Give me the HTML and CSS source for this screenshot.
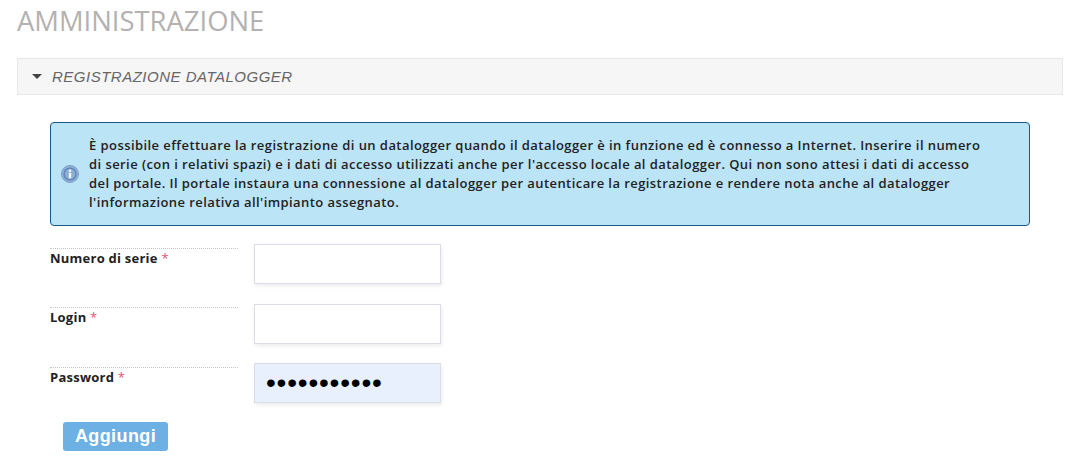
FILE: index.html
```html
<!DOCTYPE html>
<html lang="it">
<head>
<meta charset="utf-8">
<title>Amministrazione</title>
<link rel="stylesheet" href="styles.css">
</head>
<body>
<h1 class="page-title">AMMINISTRAZIONE</h1>
<div class="panel-head"><span class="caret"></span><span class="panel-title">REGISTRAZIONE DATALOGGER</span></div>
<main class="content">
  <div class="alert">
    <svg class="alert-icon" width="18" height="18" viewBox="0 0 18 18" aria-hidden="true">
      <circle cx="9" cy="9" r="8.5" fill="#8fb0d6" stroke="#7d9fca" stroke-width="1"/>
      <circle cx="9" cy="9" r="6.6" fill="#5f86b8"/>
      <circle cx="9" cy="9" r="5.2" fill="#8eaed4"/>
      <circle cx="9" cy="5.8" r="1.3" fill="#f4f7fb"/>
      <rect x="7.8" y="7.8" width="2.4" height="5.4" rx="0.8" fill="#f4f7fb"/>
    </svg>
    <p class="alert-text">È possibile effettuare la registrazione di un datalogger quando il datalogger è in funzione ed è connesso a Internet. Inserire il numero<br>di serie (con i relativi spazi) e i dati di accesso utilizzati anche per l'accesso locale al datalogger. Qui non sono attesi i dati di accesso<br>del portale. Il portale instaura una connessione al datalogger per autenticare la registrazione e rendere nota anche al datalogger<br>l'informazione relativa all'impianto assegnato.</p>
  </div>
  <form class="form">
    <div class="row">
      <label class="label">Numero di serie <span class="req">*</span></label>
      <input class="input" type="text">
    </div>
    <div class="row">
      <label class="label">Login <span class="req">*</span></label>
      <input class="input" type="text">
    </div>
    <div class="row">
      <label class="label">Password <span class="req">*</span></label>
      <input class="input input-filled" type="password" value="12345678901">
    </div>
    <button class="btn" type="button">Aggiungi</button>
  </form>
</main>
</body>
</html>
```
FILE: styles.css
```css
* { box-sizing: border-box; }
html, body { margin: 0; background: #fff; }
body { width: 1086px; height: 458px; padding: 0 23px 0 17px; overflow: hidden; font-family: "Open Sans", sans-serif; color: #222; }
.page-title { margin: 0; height: 58px; padding-top: 4px; font-size: 27.4px; line-height: 34px; font-weight: 400; color: #b3b1b1; }
.panel-head { display: flex; align-items: center; height: 37px; padding-left: 14px; background: #f6f6f6; border: 1px solid #e8e8e8; }
.caret { width: 0; height: 0; margin-right: 10px; border-left: 5px solid transparent; border-right: 5px solid transparent; border-top: 5px solid #444; }
.panel-title { font-family: "Liberation Sans", Arial, sans-serif; font-style: italic; font-size: 15px; color: #666; letter-spacing: 0.5px; }
.content { padding: 27px 33px 0; }
.alert { display: flex; align-items: center; height: 104px; padding: 0 0 0 10px; background: #bce4f7; border: 1px solid #175a85; border-radius: 4px; }
.alert-icon { flex: none; margin-right: 10px; }
.alert-text { margin: 0; font-size: 13px; line-height: 19px; font-weight: 600; color: #222; letter-spacing: 0.43px; white-space: nowrap; }
.form { padding-top: 18px; }
.row { display: flex; align-items: flex-start; height: 59.5px; }
.label { width: 188px; margin-top: 3.5px; margin-right: 16px; border-top: 1px dotted #c4c4c4; font-size: 13px; line-height: 18px; font-weight: 700; letter-spacing: 0.24px; color: #222; }
.req { color: #e0557a; font-weight: 400; }
.input { width: 187px; height: 40px; padding: 0 12px; background: #fff; border: 1px solid #dcdce4; border-radius: 0; box-shadow: 1px 2px 4px rgba(0,0,0,.08); font-size: 14px; font-family: "Liberation Sans", Arial, sans-serif; outline: none; }
.input-filled { padding-left: 11px; background: #e8f0fe; font-size: 28px; letter-spacing: 0.8px; }
.btn { display: block; width: 105px; height: 29px; margin: -0.5px 0 0 13px; padding: 0; background: #6cb0e4; border: 0; border-radius: 3px; color: #fff; font-family: "Liberation Sans", Arial, sans-serif; font-size: 18px; font-weight: 700; letter-spacing: 0.4px; }
```
